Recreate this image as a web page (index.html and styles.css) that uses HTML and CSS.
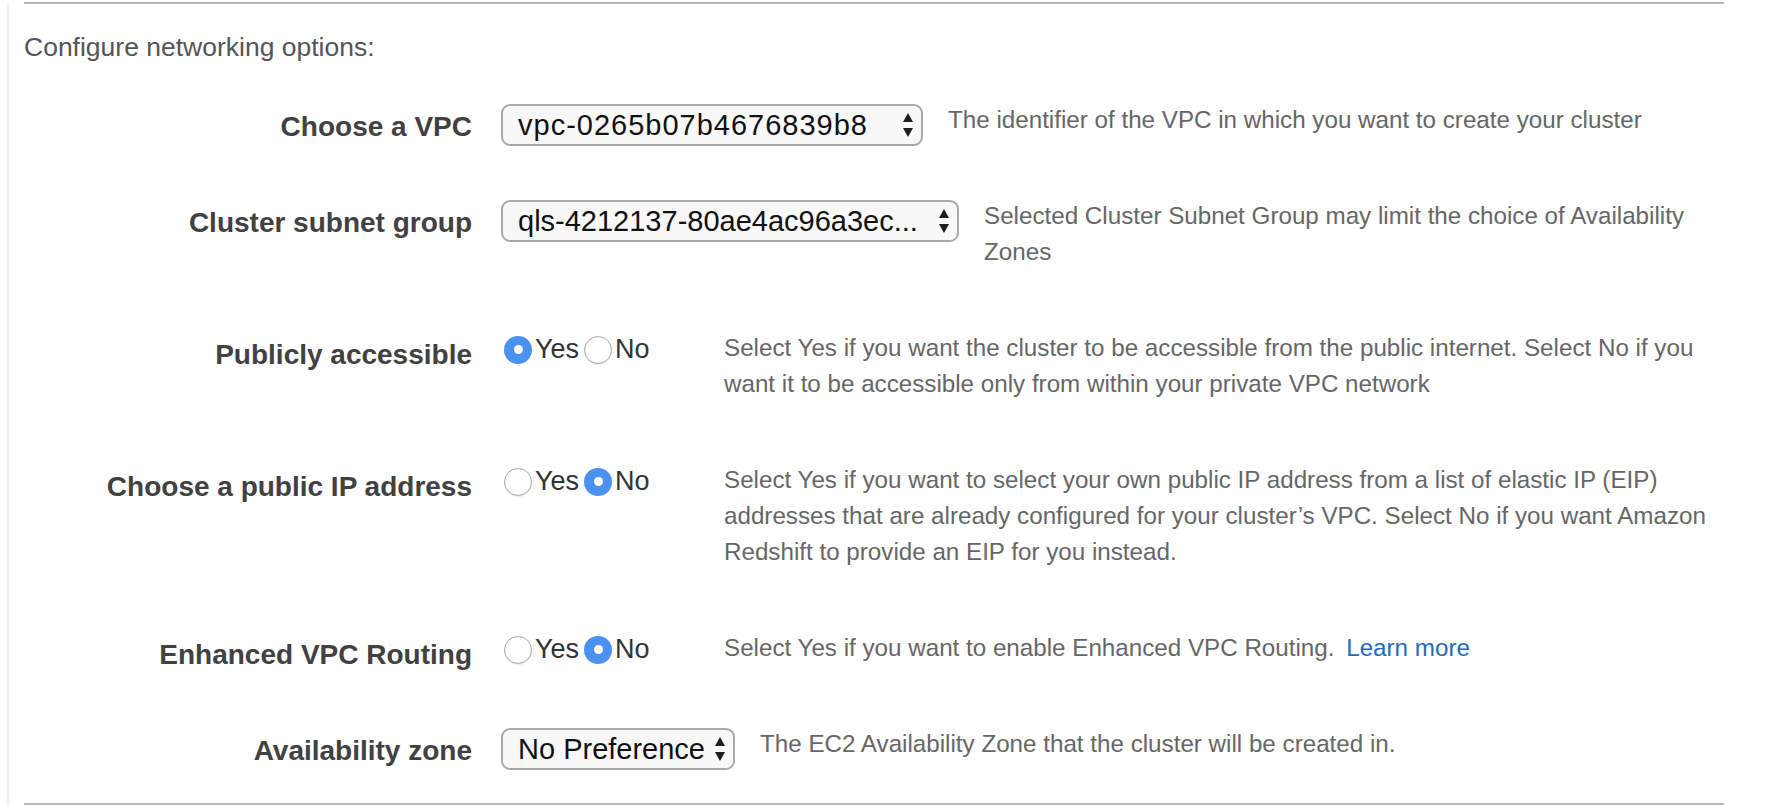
FILE: index.html
```html
<!DOCTYPE html>
<html lang="en">
<head>
<meta charset="utf-8">
<title>Configure networking options</title>
<link rel="stylesheet" href="styles.css">
</head>
<body>
<div class="page">
  <section class="net">
    <p class="intro">Configure networking options:</p>

    <div class="row">
      <div class="label">Choose a VPC</div>
      <div class="select w-vpc">
        <span class="val val-wide">vpc-0265b07b4676839b8</span>
        <svg class="arrows" width="10" height="24" viewBox="0 0 10 24"><path d="M5 0 L10 9 H0 Z M0 15 H10 L5 24 Z" fill="#1e1e1e"/></svg>
      </div>
      <div class="desc after-select">The identifier of the VPC in which you want to create your cluster</div>
    </div>

    <div class="row">
      <div class="label">Cluster subnet group</div>
      <div class="select w-subnet">
        <span class="val">qls-4212137-80ae4ac96a3ec...</span>
        <svg class="arrows" width="10" height="24" viewBox="0 0 10 24"><path d="M5 0 L10 9 H0 Z M0 15 H10 L5 24 Z" fill="#1e1e1e"/></svg>
      </div>
      <div class="desc after-select">Selected Cluster Subnet Group may limit the choice of Availability Zones</div>
    </div>

    <div class="row">
      <div class="label">Publicly accessible</div>
      <div class="radios">
        <label class="opt"><input type="radio" name="pub" checked><span>Yes</span></label>
        <label class="opt"><input type="radio" name="pub"><span>No</span></label>
      </div>
      <div class="desc">Select Yes if you want the cluster to be accessible from the public internet. Select No if you want it to be accessible only from within your private VPC network</div>
    </div>

    <div class="row">
      <div class="label">Choose a public IP address</div>
      <div class="radios">
        <label class="opt"><input type="radio" name="eip"><span>Yes</span></label>
        <label class="opt"><input type="radio" name="eip" checked><span>No</span></label>
      </div>
      <div class="desc">Select Yes if you want to select your own public IP address from a list of elastic IP (EIP) addresses that are already configured for your cluster’s VPC. Select No if you want Amazon Redshift to provide an EIP for you instead.</div>
    </div>

    <div class="row">
      <div class="label">Enhanced VPC Routing</div>
      <div class="radios">
        <label class="opt"><input type="radio" name="evr"><span>Yes</span></label>
        <label class="opt"><input type="radio" name="evr" checked><span>No</span></label>
      </div>
      <div class="desc">Select Yes if you want to enable Enhanced VPC Routing. <a class="link" href="#">Learn more</a></div>
    </div>

    <div class="row">
      <div class="label">Availability zone</div>
      <div class="select w-az">
        <span class="val">No Preference</span>
        <svg class="arrows" width="10" height="24" viewBox="0 0 10 24"><path d="M5 0 L10 9 H0 Z M0 15 H10 L5 24 Z" fill="#1e1e1e"/></svg>
      </div>
      <div class="desc after-select">The EC2 Availability Zone that the cluster will be created in.</div>
    </div>
  </section>
</div>
</body>
</html>
```

FILE: styles.css
```css
html, body {
  margin: 0;
  padding: 0;
  background: #fff;
  overflow: hidden;
}

body {
  font-family: "Liberation Sans", Arial, Helvetica, sans-serif;
}

.page {
  margin-left: 7px;
  border-left: 2px solid #efefef;
  padding-left: 15px;
  height: 806px;
  box-sizing: border-box;
}

.net {
  width: 1700px;
  margin-top: 2px;
  border-top: 2px solid #b7b7b7;
  border-bottom: 2px solid #b7b7b7;
  padding-bottom: 41px;
}

.intro {
  margin: 25px 0 37px;
  font-size: 26.5px;
  line-height: 36px;
  color: #555;
}

.row {
  display: flex;
  align-items: flex-start;
}

.row + .row {
  margin-top: 60px;
}

.label {
  flex: 0 0 448px;
  margin-right: 29px;
  text-align: right;
  font-size: 28px;
  font-weight: bold;
  color: #414141;
  padding-top: 13px;
  line-height: 23px;
  height: 36px;
  box-sizing: border-box;
  white-space: nowrap;
}

.select {
  flex: 0 0 auto;
  display: flex;
  align-items: center;
  height: 42px;
  margin-top: 2px;
  margin-bottom: -8px;
  padding: 0 8px 0 15px;
  box-sizing: border-box;
  border: 2px solid #aaaaaa;
  border-radius: 9px;
  background: #f8f8f8;
  color: #111;
  font-size: 29px;
}

.w-vpc { width: 422px; }
.w-subnet { width: 458px; }
.w-az { width: 234px; }

.val {
  flex: 1 1 auto;
  min-width: 0;
  overflow: hidden;
  white-space: nowrap;
  line-height: 38px;
}

.val-wide {
  letter-spacing: 1px;
}

.arrows {
  flex: 0 0 auto;
  margin-left: 3px;
}

.desc {
  flex: 1 1 auto;
  min-width: 0;
  font-size: 24.2px;
  line-height: 36px;
  color: #666;
}

.after-select {
  margin-left: 25px;
}

.radios {
  flex: 0 0 220px;
  display: flex;
  align-items: center;
  height: 36px;
  margin-left: 3px;
  padding-top: 3px;
  box-sizing: border-box;
}

.opt {
  display: flex;
  align-items: center;
  font-size: 27px;
  color: #333;
}

.opt + .opt {
  margin-left: 5px;
}

.opt input {
  appearance: none;
  -webkit-appearance: none;
  margin: 0 3px 0 0;
  width: 28px;
  height: 28px;
  border-radius: 50%;
  box-sizing: border-box;
  border: 1px solid #ababab;
  background: #fff;
  box-shadow: inset 0 -1px 2px rgba(0, 0, 0, 0.06), 0 1px 1px rgba(0, 0, 0, 0.08);
  display: flex;
  align-items: center;
  justify-content: center;
}

.opt input:checked {
  border: none;
  background: #4b91f1;
  box-shadow: none;
}

.opt input:checked::after {
  content: "";
  width: 9px;
  height: 9px;
  border-radius: 50%;
  background: #fff;
}

.link {
  color: #1d6bbd;
  text-decoration: none;
  margin-left: 5px;
}
```
